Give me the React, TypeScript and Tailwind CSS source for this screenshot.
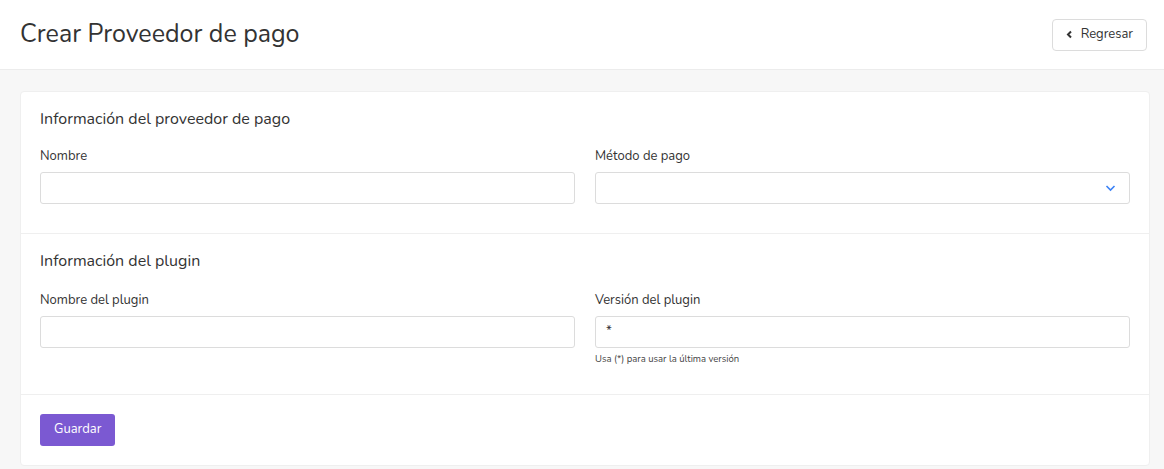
import React from "react";

const font = { fontFamily: "Nunito, Lato, 'Noto Sans', sans-serif" };

function Field({ label, value, select, help }: { label: string; value?: string; select?: boolean; help?: string }) {
  return (
    <div className="flex flex-col">
      <label className="text-[13px] leading-[18px] text-[#333] mb-[7px] h-[18px]">{label}</label>
      <div className="relative h-[32px] rounded-[3px] border border-[#dcdcdc] bg-white flex items-center px-[10px] text-[13px] text-[#333]">
        {value}
        {select && (
          <svg className="absolute right-[13px] top-[11px]" width="11" height="8" viewBox="0 0 11 8" fill="none">
            <path d="M1.5 2 L5.5 6 L9.5 2" stroke="#3b82f6" strokeWidth="1.6" />
          </svg>
        )}
      </div>
      {help && <div className="text-[9.5px] leading-[12px] text-[#444] mt-[5px]">{help}</div>}
    </div>
  );
}

export default function App() {
  return (
    <div className="w-[1164px] h-[469px] bg-[#f7f7f7] overflow-hidden" style={font}>
      <div className="h-[70px] bg-white border-b border-[#ececec] flex items-center justify-between pr-[17px] pl-[20px]">
        <h1 className="text-[25px] text-[#333] font-normal">Crear Proveedor de pago</h1>
        <button className="h-[32px] px-[13px] border border-[#dcdcdc] rounded-[4px] bg-white flex items-center gap-[8px] text-[13px] text-[#333]">
          <svg width="7" height="9" viewBox="0 0 7 9"><path d="M5 1.5 L2 4.5 L5 7.5" stroke="#333" strokeWidth="2" fill="none" /></svg>
          Regresar
        </button>
      </div>
      <div className="pl-[20px] pr-[14px] pt-[21px]">
        <div className="bg-white rounded-[4px] border border-[#efefef]">
          <div className="px-[19px] pt-[17px] pb-[29px] border-b border-[#efefef]">
            <h2 className="text-[16px] leading-[20px] text-[#333] mb-[18px]">Información del proveedor de pago</h2>
            <div className="grid grid-cols-2 gap-x-[20px]">
              <Field label="Nombre" />
              <Field label="Método de pago" select />
            </div>
          </div>
          <div className="px-[19px] pt-[17px] pb-[29px] border-b border-[#efefef]">
            <h2 className="text-[16px] leading-[20px] text-[#333] mb-[20px]">Información del plugin</h2>
            <div className="grid grid-cols-2 gap-x-[20px]">
              <Field label="Nombre del plugin" />
              <Field label="Versión del plugin" value="*" help="Usa (*) para usar la última versión" />
            </div>
          </div>
          <div className="px-[19px] pt-[19px] pb-[19px]">
            <button className="h-[32px] px-[14px] rounded-[3px] bg-[#7b59d2] text-white text-[13px]">Guardar</button>
          </div>
        </div>
      </div>
    </div>
  );
}
